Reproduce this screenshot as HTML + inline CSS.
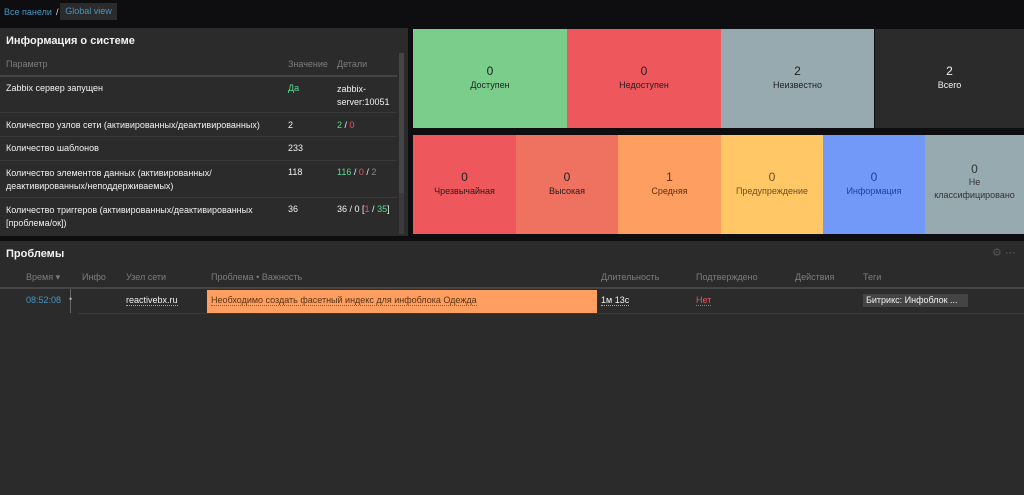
<!DOCTYPE html>
<html><head><meta charset="utf-8"><style>
body{margin:0;width:1024px;height:495px;background:#0e0e10;font-family:"Liberation Sans",sans-serif;font-size:9px;color:#f2f2f2;position:relative;overflow:hidden}
.a{position:absolute}
.hd{color:#7d7d7d}
.tile{position:absolute;text-align:center;color:#1f1f1f;font-size:9px}
.tile b{display:block;font-weight:normal;font-size:12px;margin-bottom:2px}
.ln{position:absolute;left:0;width:397px;height:1px;background:#383838}
</style></head><body>
<div class="a" style="left:4px;top:7px;color:#4796c4;font-size:9px">Все панели</div>
<div class="a" style="left:56px;top:7px;color:#ddd">/</div>
<div class="a" style="left:60px;top:3px;width:57px;height:17px;background:#2b2b2b;color:#4796c4;line-height:17px;text-align:center">Global view</div>

<div class="a" style="left:0;top:28px;width:408px;height:208px;background:#2b2b2b">
<div class="a" style="left:6px;top:7px;font-size:11px;font-weight:bold">Информация о системе</div>
<div class="a" style="left:399px;top:25px;width:5px;height:181px;background:#3a3a3a"></div>
<div class="a" style="left:399px;top:25px;width:5px;height:140px;background:#454545"></div>
<div class="a hd" style="left:6px;top:31px">Параметр</div>
<div class="a hd" style="left:288px;top:31px">Значение</div>
<div class="a hd" style="left:337px;top:31px">Детали</div>
<div class="ln" style="top:47px;height:2px;background:#444"></div>
<div class="a" style="left:6px;top:55px">Zabbix сервер запущен</div>
<div class="a" style="left:288px;top:55px;color:#59db8f">Да</div>
<div class="a" style="left:337px;top:55px;line-height:13px">zabbix-<br>server:10051</div>
<div class="ln" style="top:84px"></div>
<div class="a" style="left:6px;top:92px">Количество узлов сети (активированных/деактивированных)</div>
<div class="a" style="left:288px;top:92px">2</div>
<div class="a" style="left:337px;top:92px"><span style="color:#59db8f">2</span> / <span style="color:#e45959">0</span></div>
<div class="ln" style="top:108px"></div>
<div class="a" style="left:6px;top:115px">Количество шаблонов</div>
<div class="a" style="left:288px;top:115px">233</div>
<div class="ln" style="top:132px"></div>
<div class="a" style="left:6px;top:139px;line-height:13px">Количество элементов данных (активированных/<br>деактивированных/неподдерживаемых)</div>
<div class="a" style="left:288px;top:139px">118</div>
<div class="a" style="left:337px;top:139px"><span style="color:#59db8f">116</span> / <span style="color:#e45959">0</span> / <span style="color:#888">2</span></div>
<div class="ln" style="top:169px"></div>
<div class="a" style="left:6px;top:176px;line-height:13px">Количество триггеров (активированных/деактивированных<br>[проблема/ок])</div>
<div class="a" style="left:288px;top:176px">36</div>
<div class="a" style="left:337px;top:176px">36 / 0 [<span style="color:#e45959">1</span> / <span style="color:#59db8f">35</span>]</div>
</div>

<div class="tile" style="left:413px;top:29px;width:154px;height:99px;background:#7bcd8c"><div style="padding-top:35px"><b>0</b>Доступен</div></div>
<div class="tile" style="left:567px;top:29px;width:154px;height:99px;background:#ee585d"><div style="padding-top:35px"><b>0</b>Недоступен</div></div>
<div class="tile" style="left:721px;top:29px;width:153px;height:99px;background:#97aab0"><div style="padding-top:35px"><b>2</b>Неизвестно</div></div>
<div class="tile" style="left:875px;top:29px;width:149px;height:99px;background:#2b2b2b;color:#f2f2f2"><div style="padding-top:35px"><b>2</b>Всего</div></div>

<div class="tile" style="left:413px;top:135px;width:103px;height:99px;background:#ee575c"><div style="padding-top:35px"><b>0</b>Чрезвычайная</div></div>
<div class="tile" style="left:516px;top:135px;width:102px;height:99px;background:#ef7260"><div style="padding-top:35px"><b>0</b>Высокая</div></div>
<div class="tile" style="left:618px;top:135px;width:103px;height:99px;background:#fe9e60;color:#5a3210"><div style="padding-top:35px"><b>1</b>Средняя</div></div>
<div class="tile" style="left:721px;top:135px;width:102px;height:99px;background:#ffc766;color:#6b5020"><div style="padding-top:35px"><b>0</b>Предупреждение</div></div>
<div class="tile" style="left:823px;top:135px;width:102px;height:99px;background:#7299f7;color:#1d3fa5"><div style="padding-top:35px"><b>0</b>Информация</div></div>
<div class="tile" style="left:925px;top:135px;width:99px;height:99px;background:#97aab0;color:#333"><div style="padding-top:28px;line-height:13px"><b style="margin:0">0</b>Не<br>классифицировано</div></div>

<div class="a" style="left:0;top:241px;width:1024px;height:254px;background:#2b2b2b">
<div class="a" style="left:6px;top:7px;font-size:11px;font-weight:bold">Проблемы</div>
<div class="a" style="left:992px;top:5px;color:#555;font-size:11px">⚙ ⋯</div>
<div class="a hd" style="left:26px;top:31px">Время ▾</div>
<div class="a hd" style="left:82px;top:31px">Инфо</div>
<div class="a hd" style="left:126px;top:31px">Узел сети</div>
<div class="a hd" style="left:211px;top:31px">Проблема • Важность</div>
<div class="a hd" style="left:601px;top:31px">Длительность</div>
<div class="a hd" style="left:696px;top:31px">Подтверждено</div>
<div class="a hd" style="left:795px;top:31px">Действия</div>
<div class="a hd" style="left:863px;top:31px">Теги</div>
<div class="a" style="left:0;top:46px;width:1024px;height:2px;background:#444"></div>
<div class="a" style="left:26px;top:54px;color:#4796c4">08:52:08</div>
<div class="a" style="left:70px;top:48px;width:1px;height:24px;background:#666"></div>
<div class="a" style="left:69px;top:53px;color:#aaa">•</div>
<div class="a" style="left:126px;top:54px;border-bottom:1px dotted #aaa">reactivebx.ru</div>
<div class="a" style="left:207px;top:49px;width:390px;height:23px;background:#fe9e60"></div>
<div class="a" style="left:211px;top:54px;color:#5a3210;border-bottom:1px dotted #8a5a30">Необходимо создать фасетный индекс для инфоблока Одежда</div>
<div class="a" style="left:601px;top:54px;border-bottom:1px dotted #aaa">1м 13с</div>
<div class="a" style="left:696px;top:54px;color:#e45959;border-bottom:1px dotted #e45959">Нет</div>
<div class="a" style="left:863px;top:53px;width:105px;height:13px;background:#444;line-height:13px;padding-left:3px;box-sizing:border-box">Битрикс: Инфоблок ...</div>
<div class="a" style="left:78px;top:72px;width:946px;height:1px;background:#383838"></div>
</div>
</body></html>
